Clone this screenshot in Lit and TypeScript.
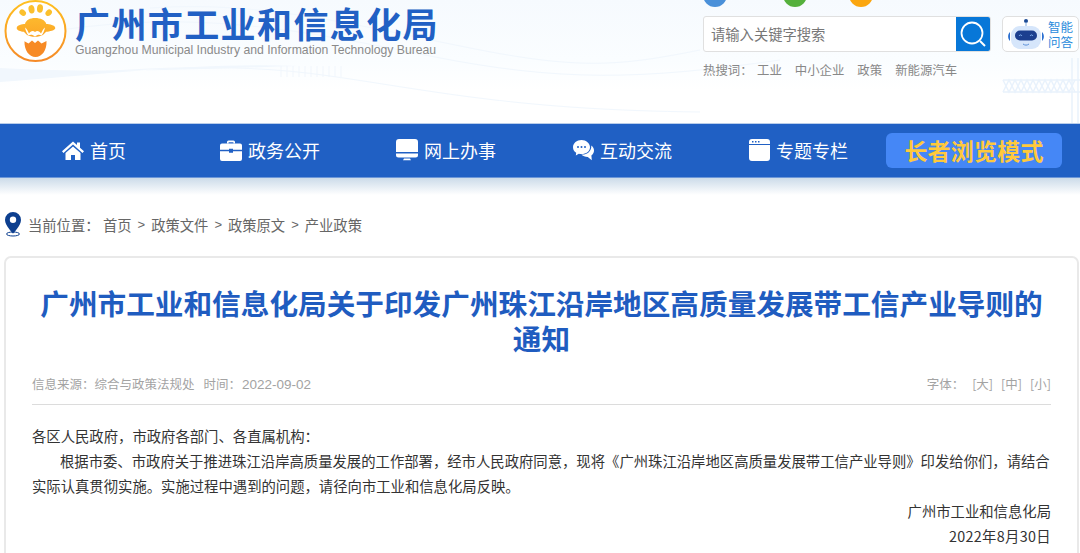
import { LitElement, html, css } from "lit";
import { customElement } from "lit/decorators.js";

@customElement("app-root")
export class AppRoot extends LitElement {
  static styles = css`
    :host { display: block; width: 1080px; height: 553px; overflow: hidden; background: #fff; font-family: "Noto Sans CJK SC", "Liberation Sans", sans-serif; position: relative; }
    .head { height: 124px; position: relative; background: linear-gradient(180deg,#f6fafe 0,#fafdff 60px,#fff 90px); display: flex; }
    .deco { position: absolute; left: 0; top: 0; pointer-events: none; }
    .logo { position: relative; display: flex; padding-left: 4px; height: 64px; }
    .brand { position: relative; margin-left: 7px; display: flex; flex-direction: column; }
    .brand-cn { margin-top: 3px; font-size: 35px; line-height: 40px; font-weight: 700; color: #2160c4; letter-spacing: 1.4px; white-space: nowrap; }
    .brand-en { font-family: "Liberation Sans", sans-serif; font-size: 12.23px; line-height: 14px; color: #8a8a8a; white-space: nowrap; }
    .right { position: absolute; left: 703px; top: 0; width: 377px; }
    .dots { height: 8px; position: relative; overflow: hidden; }
    .dot { position: absolute; top: -17px; width: 24px; height: 24px; border-radius: 50%; }
    .row { margin-top: 8px; display: flex; }
    .search { width: 288px; height: 36px; box-sizing: border-box; border: 1px solid #e0e0e0; border-radius: 3px; background: #fff; display: flex; overflow: hidden; }
    .search span { flex: 1; font-size: 14.3px; line-height: 34px; color: #777; padding-left: 7px; }
    .sbtn { width: 34px; background: #0777d8; display: flex; align-items: center; justify-content: center; }
    .ai { margin-left: 11px; width: 77px; height: 36px; box-sizing: border-box; border: 1px solid #e0e0e0; border-radius: 5px; background: #fff; display: flex; align-items: center; padding-left: 4px; }
    .ai b { font-weight: 400; font-size: 12.5px; line-height: 15px; color: #2a8bdc; margin-left: 3px; width: 26px; }
    .hot { margin-top: 9px; display: flex; font-size: 12.4px; line-height: 18px; color: #888; white-space: nowrap; }
    .hot span { margin-right: 13px; }
    .hot .lbl { margin-right: 0; width: 54px; }
    .nav { height: 53px; background: #2060c4; display: flex; position: relative; box-shadow: 0 -1px 0 #b9cdea, 0 1px 0 #6d97d8; }
    .item { position: absolute; top: 0; height: 52px; display: flex; align-items: center; color: #fff; font-size: 18px; white-space: nowrap; }
    .item svg { margin-right: 6px; display: block; }
    .elder { position: absolute; left: 886px; top: 9px; width: 176px; height: 35px; border-radius: 6px; background: #4587f6; color: #ffc93c; font-size: 23px; font-weight: 700; line-height: 34px; text-align: center; letter-spacing: 0.2px; }
    .fade { height: 18px; background: linear-gradient(180deg,#c9d9e8 0,#fff 100%); }
    .crumb { margin-top: 15px; height: 28px; padding-left: 4px; display: flex; align-items: center; font-size: 14.3px; color: #666; white-space: nowrap; }
    .crumb svg { margin-right: 6px; }
    .crumb .lbl { width: 75px; }
    .crumb .sep { margin: 0 6px; font-family: "Liberation Sans", sans-serif; font-size: 13px; }
    .card { margin: 18px 0 0 4px; width: 1075px; height: 400px; box-sizing: border-box; border: 2px solid #e9e9e9; border-radius: 7px; padding: 0 26px; }
    h1 { margin: 27px 0 0; font-size: 28.65px; line-height: 35px; font-weight: 700; color: #1f5cc0; text-align: center; }
    .meta { margin-top: 19px; height: 30px; border-bottom: 1px solid #dcdcdc; display: flex; justify-content: space-between; font-size: 12.5px; line-height: 20px; color: #a3a3a3; white-space: nowrap; }
    .meta .time { margin-left: 9px; }
    .meta .num { font-size: 13.5px; font-family: "Liberation Sans", sans-serif; margin-left: 1px; }
    .meta i { font-style: normal; margin-left: 8px; }
    .body { font-size: 14.35px; line-height: 25px; color: #333; margin-top: 18px; }
    .body p { margin: 0; }
    .ind { text-indent: 28px; }
    .sign { text-align: right; }
    .date { letter-spacing: 0.33px; }
  `;

  icon(kind: string) {
    if (kind === "home") return html`<svg width="22" height="19" viewBox="0 0 22 19"><path d="M11 .5 0 10.2l1.5 1.7L11 3.6l9.5 8.3 1.5-1.7-4-3.5V1.5h-3v2.6z" fill="#fff"/><path d="M11 5.4 3.5 12v7H9v-5h4v5h5.5v-7z" fill="#fff"/></svg>`;
    if (kind === "case") return html`<svg width="22" height="21" viewBox="0 0 22 21"><path d="M7 3.500V2a1.500 1.500 0 0 1 1.500-1.500h5A1.500 1.500 0 0 1 15 2v1.500h-1.600V2.200H8.600v1.300z" fill="#fff"/><path d="M2 3.500h18a2 2 0 0 1 2 2v4.300H13v-1H9v1H0V5.500a2 2 0 0 1 2-2zM0 11.200h9v1.600h4v-1.600h9V19a2 2 0 0 1-2 2H2a2 2 0 0 1-2-2z" fill="#fff"/></svg>`;
    if (kind === "screen") return html`<svg width="22" height="22" viewBox="0 0 22 22"><path d="M3 0h16a3 3 0 0 1 3 3v10H0V3a3 3 0 0 1 3-3zM0 14.600h22V16a2.500 2.500 0 0 1-2.500 2.500h-17A2.500 2.500 0 0 1 0 16zM8 19.500h6l1 1.800H7z" fill="#fff"/></svg>`;
    if (kind === "chat") return html`<svg width="21" height="21" viewBox="0 0 21 21"><path d="M8.500 0C3.800 0 0 3.200 0 7.200c0 2.300 1.200 4.300 3.200 5.600l-.4 2.600 3-1.600c.9.2 1.800.3 2.700.3 4.700 0 8.500-3 8.500-6.900S13.200 0 8.500 0z" fill="#fff"/><circle cx="5" cy="7" r="1" fill="#2060c4"/><circle cx="8.500" cy="7" r="1" fill="#2060c4"/><circle cx="12" cy="7" r="1" fill="#2060c4"/><path d="M18.300 5.500c1.700 1.200 2.700 3 2.700 5 0 2-1 3.800-2.600 5l.4 4.800-4-3.300c-2.600 0-5-1-6.500-2.500 5.300.5 10.500-3 10-9z" fill="#fff"/></svg>`;
    return html`<svg width="21" height="22" viewBox="0 0 21 22"><path d="M3 0h15a3 3 0 0 1 3 3v2H0V3a3 3 0 0 1 3-3zM0 6h21v13a3 3 0 0 1-3 3H3a3 3 0 0 1-3-3z" fill="#fff"/><rect x="3" y="2" width="1.500" height="1.500" fill="#2060c4"/><rect x="6" y="2" width="1.500" height="1.500" fill="#2060c4"/><rect x="9" y="2" width="1.500" height="1.500" fill="#2060c4"/></svg>`;
  }

  render() {
    const nav = [
      ["home", "首页", 62],
      ["case", "政务公开", 220],
      ["screen", "网上办事", 396],
      ["chat", "互动交流", 573],
      ["tab", "专题专栏", 749],
    ] as [string, string, number][];
    return html`
      <div class="head">
        <svg class="deco" width="1080" height="124" viewBox="0 0 1080 124" fill="none">
          <path d="M0 82C110 74 200 62 300 66 220 68 110 74 0 68z" fill="#f1f7fd"/>
          <g stroke="#f1f7fd" stroke-width="1">
            <path d="M0 80C120 70 220 60 330 76S520 110 700 112"/>
            <path d="M60 30C200 10 300 30 430 56S640 80 780 60"/>
            <path d="M150 8C260 0 360 26 470 48S620 66 700 50"/>
          </g>
          <g stroke="#f1f6fc" stroke-width="1"><path d="M281 66v11M287 66v11M293 66v11M299 66v11M305 66v11M311 66v11M317 66v11M323 66v11M329 66v11M335 66v11M341 66v11"/></g>
          <g stroke="#e9f2fc" stroke-width="1.500">
            <path d="M1003 80h77M1003 92h77M1003 80l6 12 6-12 6 12 6-12 6 12 6-12 6 12 6-12 6 12 6-12 6 12 6-12"/>
            <path d="M1003 92l6-12 6 12 6-12 6 12 6-12 6 12 6-12 6 12 6-12 6 12 6-12 6 12"/>
            <path d="M1072 58v66M1078 58v66"/>
          </g>
        </svg>
        <div class="logo">
          <svg width="64" height="64" viewBox="0 0 64 64">
            <defs>
              <linearGradient id="lg" x1="0" y1="0" x2="0" y2="1"><stop offset="0" stop-color="#ffc020"/><stop offset="1" stop-color="#f58a28"/></linearGradient>
              <linearGradient id="lh" x1="0" y1="0" x2="0" y2="1"><stop offset="0" stop-color="#fdb92e"/><stop offset="1" stop-color="#fca626"/></linearGradient>
            </defs>
            <circle cx="31.500" cy="31" r="30" fill="#fff" stroke="url(#lg)" stroke-width="2"/>
            <g fill="#fbc02d">
              <ellipse cx="18.700" cy="12.700" rx="2.800" ry="3.600" transform="rotate(-50 18.700 12.700)"/>
              <ellipse cx="27.500" cy="9.300" rx="3" ry="4.200" transform="rotate(-10 27.500 9.300)"/>
              <ellipse cx="36" cy="8.500" rx="3" ry="4.200" transform="rotate(5 36 8.500)"/>
              <ellipse cx="44.700" cy="12.700" rx="2.800" ry="3.600" transform="rotate(45 44.700 12.700)"/>
            </g>
            <path d="M31 18c-5 0-9 2-10 6-3 0-8 1-8.300 4-.2 2.500 4 3.500 7.300 3.800 2 2.500 4 5 11 5s9-2.500 11-5c3.300-.3 9.500-1.300 9.300-3.800-.3-3-6-4-9-4-1-4-6-6-11-6z" fill="url(#lh)"/>
            <path d="M21 27.500c2 1.500 3 4 4 6 1.500-2.500 4-3.500 6-1.500 2-2 4.500-1 6 1.500 1-2 2-4.500 4-6-.5 3-2 6.500-3.500 8-2-1-4-1-6.500 1-2.500-2-4.500-2-6.500-1-1.500-1.500-3-5-3.500-8z" fill="#fff"/>
            <path d="M20 41l4.500 2.500 3.500-3 3 2.500 3-2.500 3.500 3 5-2.500c.5 9-4.500 16-11 16s-11.500-7-11-16z" fill="#f78a25"/>
          </svg>
          <div class="brand">
            <div class="brand-cn">广州市工业和信息化局</div>
            <div class="brand-en">Guangzhou Municipal Industry and Information Technology Bureau</div>
          </div>
        </div>
        <div class="right">
          <div class="dots">
            <div class="dot" style="left:0;background:#4a90d9"></div>
            <div class="dot" style="left:80px;background:#55b03c"></div>
            <div class="dot" style="left:146px;background:#fba60f"></div>
          </div>
          <div class="row">
            <div class="search">
              <span>请输入关键字搜索</span>
              <div class="sbtn"><svg width="28" height="28" viewBox="0 0 28 28" fill="none" stroke="#fff"><circle cx="13" cy="13" r="10.500" stroke-width="1.800"/><path d="M21 21l5 5" stroke-width="2"/></svg></div>
            </div>
            <div class="ai">
              <svg width="38" height="32" viewBox="0 0 38 32">
                <circle cx="19" cy="3" r="2" fill="#1c4a94"/><path d="M19 4v5" stroke="#7fa8dc"/>
                <path d="M3 14c-2.500 2-2.500 7 0 9zM35 14c2.500 2 2.500 7 0 9z" fill="#2a6fd0"/>
                <rect x="4" y="8" width="30" height="23" rx="9" fill="#d6e6fb"/>
                <rect x="8" y="12.500" width="22" height="10" rx="5" fill="#1c3f8f"/>
                <path d="M12 18c1-1.500 2-1.500 3 0M23 18c1-1.500 2-1.500 3 0" stroke="#7fb0f0" fill="none"/>
                <path d="M16 26c2 1.500 4 1.500 6 0" stroke="#5a8fd8" fill="none"/>
              </svg>
              <b>智能问答</b>
            </div>
          </div>
          <div class="hot">
            <span class="lbl">热搜词：</span><span>工业</span><span>中小企业</span><span>政策</span><span>新能源汽车</span>
          </div>
        </div>
      </div>
      <div class="nav">
        ${nav.map(([k, t, x]) => html`<div class="item" style="left:${x}px">${this.icon(k)}${t}</div>`)}
        <div class="elder">长者浏览模式</div>
      </div>
      <div class="fade"></div>
      <div class="crumb">
        <svg width="18" height="26" viewBox="0 0 18 26"><path d="M9 1a8 8 0 0 0-8 8c0 5.500 8 13.500 8 13.500S17 14.500 17 9a8 8 0 0 0-8-8zm0 11a3.200 3.200 0 1 1 0-6.400A3.200 3.200 0 0 1 9 12z" fill="#0d3f8f"/><ellipse cx="9" cy="23" rx="6.500" ry="2" fill="none" stroke="#0d3f8f"/></svg>
        <span class="lbl">当前位置：</span><span>首页</span><span class="sep">&gt;</span><span>政策文件</span><span class="sep">&gt;</span><span>政策原文</span><span class="sep">&gt;</span><span>产业政策</span>
      </div>
      <div class="card">
        <h1>广州市工业和信息化局关于印发广州珠江沿岸地区高质量发展带工信产业导则的通知</h1>
        <div class="meta">
          <div>信息来源：综合与政策法规处<span class="time">时间：</span><span class="num">2022-09-02</span></div>
          <div>字体：<i>[大]</i><i>[中]</i><i>[小]</i></div>
        </div>
        <div class="body">
          <p>各区人民政府，市政府各部门、各直属机构：</p>
          <p class="ind">根据市委、市政府关于推进珠江沿岸高质量发展的工作部署，经市人民政府同意，现将《广州珠江沿岸地区高质量发展带工信产业导则》印发给你们，请结合实际认真贯彻实施。实施过程中遇到的问题，请径向市工业和信息化局反映。</p>
          <p class="sign">广州市工业和信息化局</p>
          <p class="sign date">2022年8月30日</p>
        </div>
      </div>
    `;
  }
}
